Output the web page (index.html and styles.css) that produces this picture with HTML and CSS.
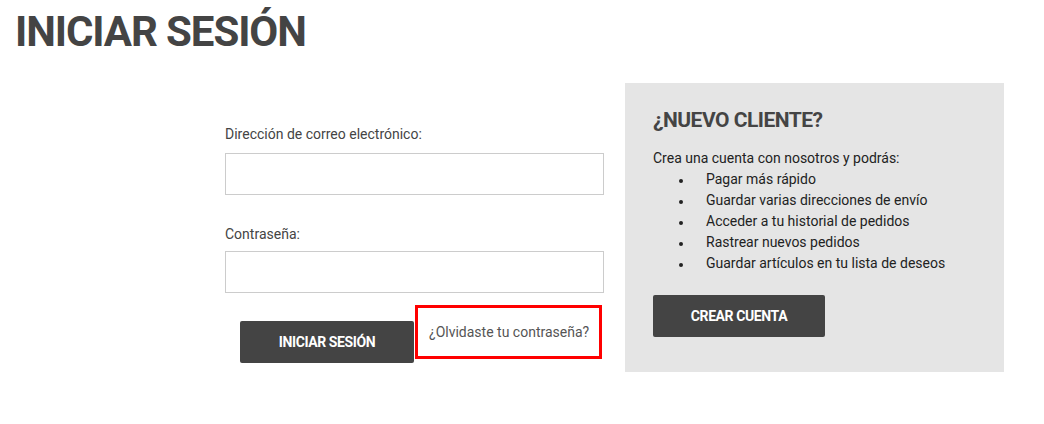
FILE: index.html
```html
<!DOCTYPE html>
<html lang="es">
<head>
<meta charset="utf-8">
<title>Iniciar sesión</title>
<link rel="stylesheet" href="styles.css">
</head>
<body>
<h1 class="page-title">INICIAR SESIÓN</h1>
<div class="layout">
  <form class="login">
    <label class="field-label" for="email">Dirección de correo electrónico:</label>
    <input class="field-input" id="email" type="email">
    <label class="field-label second" for="pass">Contraseña:</label>
    <input class="field-input" id="pass" type="password">
    <div class="actions">
      <button class="btn btn-login" type="button">INICIAR SESIÓN</button>
      <a class="forgot" href="#">¿Olvidaste tu contraseña?</a>
    </div>
  </form>
  <aside class="new-customer">
    <h2 class="panel-title">¿NUEVO CLIENTE?</h2>
    <p class="panel-intro">Crea una cuenta con nosotros y podrás:</p>
    <ul class="benefits">
      <li>Pagar más rápido</li>
      <li>Guardar varias direcciones de envío</li>
      <li>Acceder a tu historial de pedidos</li>
      <li>Rastrear nuevos pedidos</li>
      <li>Guardar artículos en tu lista de deseos</li>
    </ul>
    <button class="btn btn-create" type="button">CREAR CUENTA</button>
  </aside>
</div>
</body>
</html>
```

FILE: styles.css
```css
* { box-sizing: border-box; }
html, body { margin: 0; padding: 0; background: #fff; }
body {
  font-family: Roboto, "Liberation Sans", sans-serif;
  color: #444;
  font-size: 14px;
}
.page-title {
  margin: 0;
  padding: 8px 0 0 15px;
  font-family: Roboto, sans-serif;
  font-weight: 700;
  font-size: 42px;
  line-height: 48px;
  color: #444;
  letter-spacing: -1.1px;
}
.layout {
  display: flex;
  padding-top: 27px;
  padding-left: 225px;
}
.login {
  width: 379px;
  display: flex;
  flex-direction: column;
  padding-top: 41px;
}
.field-label {
  display: block;
  font-size: 14px;
  line-height: 20px;
  color: #444;
  margin-bottom: 9px;
}
.field-label.second { margin-top: 29px; margin-bottom: 7px; }
.field-input {
  display: block;
  width: 379px;
  height: 42px;
  border: 1px solid #ccc;
  margin: 0;
  padding: 0 10px;
  background: #fff;
}
.actions {
  display: flex;
  align-items: flex-start;
  padding-left: 15px;
  margin-top: 12px;
}
.btn {
  background: #444;
  color: #fff;
  border: 0;
  border-radius: 2px;
  height: 42px;
  font-family: Roboto, sans-serif;
  font-weight: 700;
  font-size: 14px;
  letter-spacing: -0.4px;
  padding: 0;
  cursor: pointer;
}
.btn-login {
  width: 174px;
  margin-top: 16px;
}
.forgot {
  margin-left: 1px;
  width: 187px;
  height: 54px;
  border: 3px solid #f00;
  color: #555;
  text-decoration: none;
  font-size: 14px;
  line-height: 20px;
  padding: 14px 0 0 11px;
}
.new-customer {
  margin-left: 21px;
  width: 379px;
  height: 289px;
  background: #e5e5e5;
  padding: 24px 28px 0 28px;
}
.panel-title {
  margin: 0;
  font-family: Roboto, sans-serif;
  font-weight: 700;
  font-size: 21px;
  line-height: 26px;
  letter-spacing: -0.5px;
  color: #444;
}
.panel-intro {
  margin: 15px 0 0 0;
  font-size: 14px;
  line-height: 21px;
  color: #222;
}
.benefits {
  margin: 0;
  padding-left: 53px;
  font-size: 14px;
  line-height: 21px;
  color: #222;
  list-style: none;
}
.benefits li { position: relative; }
.benefits li::before {
  content: "";
  position: absolute;
  left: -27px;
  top: 10px;
  width: 4px;
  height: 4px;
  border-radius: 50%;
  background: #222;
}
.btn-create {
  display: block;
  margin-top: 21px;
  width: 172px;
}
```
